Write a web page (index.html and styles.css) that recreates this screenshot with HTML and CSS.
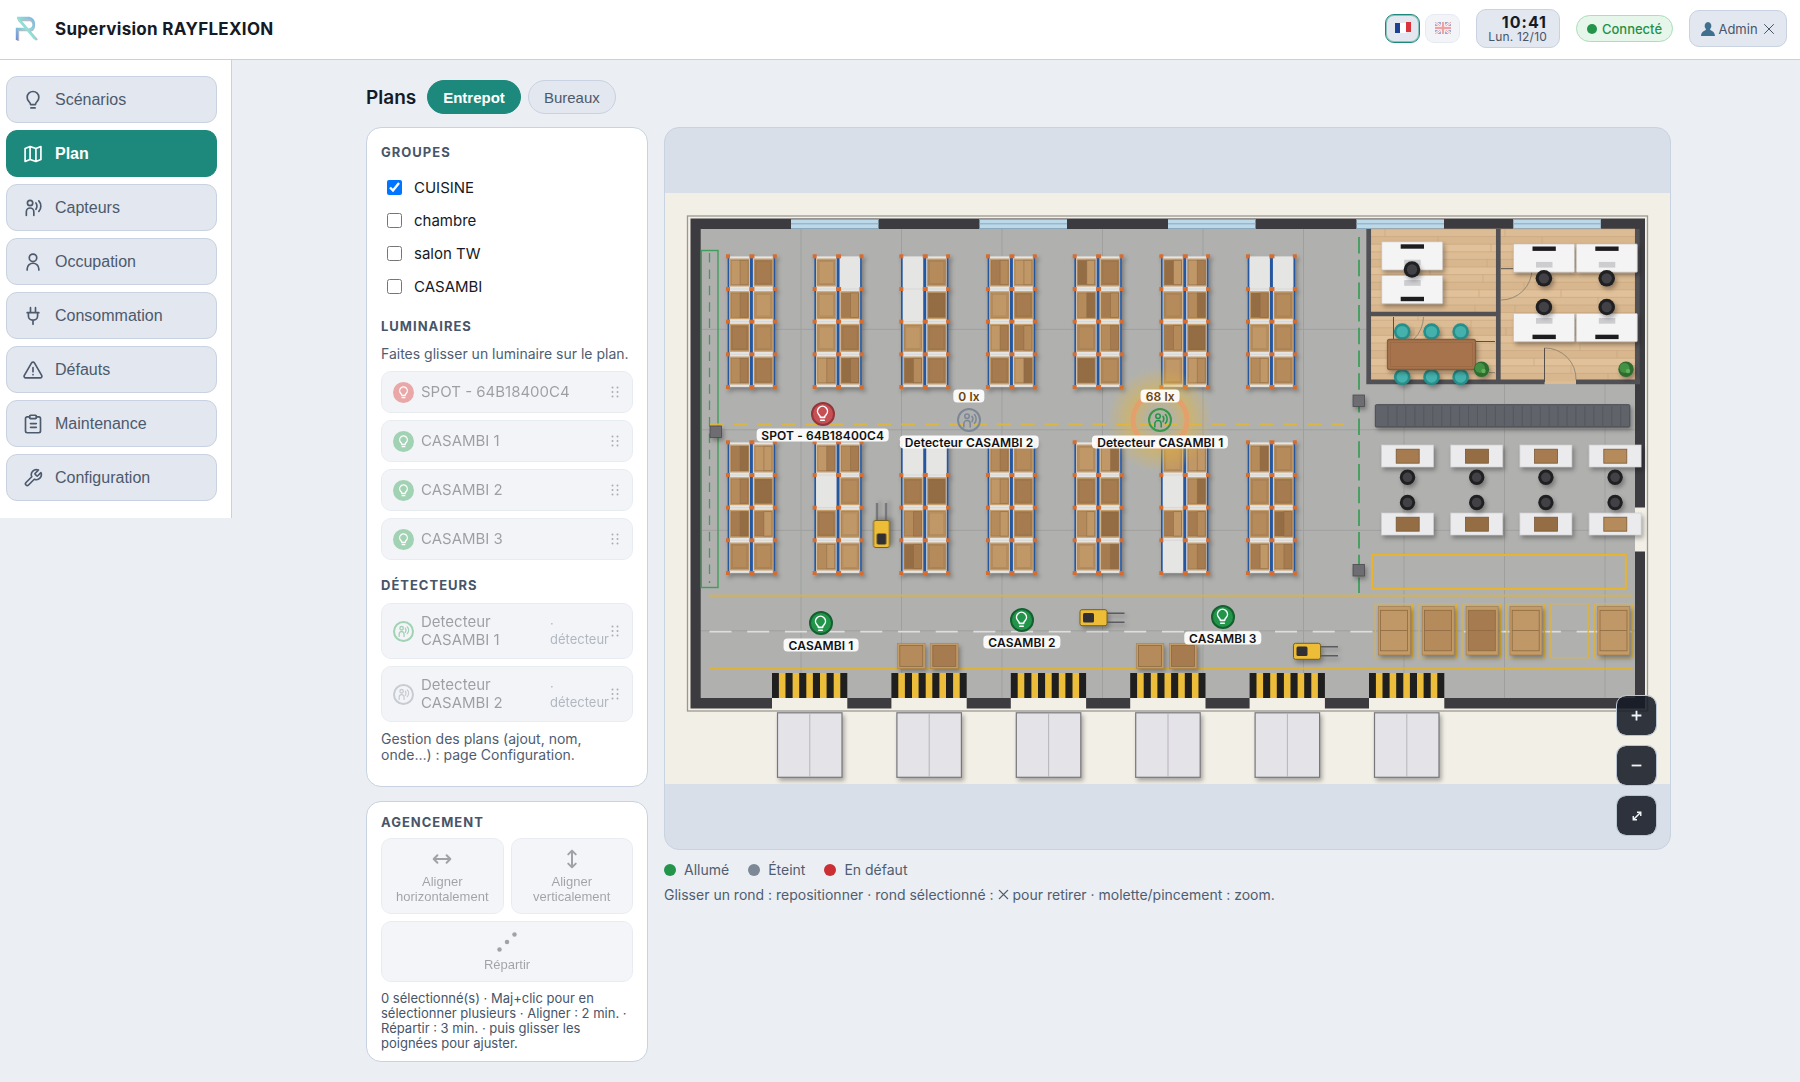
FILE: index.html
```html
<!DOCTYPE html>
<html lang="fr">
<head>
<meta charset="utf-8">
<meta name="viewport" content="width=device-width, initial-scale=1">
<title>Supervision RAYFLEXION</title>
<link rel="stylesheet" href="styles.css">
</head>
<body>
<svg class="sprite" aria-hidden="true">
  <defs>
    <symbol id="i-bulb" viewBox="0 0 24 24"><path d="M9 17.5c0-2-1-2.6-2-3.8a7 7 0 1 1 10 0c-1 1.2-2 1.800-2 3.800zM9.500 21.500h5"/></symbol>
    <symbol id="i-map" viewBox="0 0 24 24"><path d="M2.500 5.500v15.500l6-2.500 7 2.500 6-2.500V3l-6 2.500-7-2.500zM8.500 3v15.500M15.500 5.500V21"/></symbol>
    <symbol id="i-sensor" viewBox="0 0 24 24"><circle cx="8.500" cy="6" r="3.200"/><path d="M4 21v-4.500a4.500 4.500 0 0 1 9 0V21M15.500 6c1.500 2 1.500 5 0 7.500M19 3.500c3.200 3.500 3.200 9 0 12.500"/></symbol>
    <symbol id="i-user" viewBox="0 0 24 24"><circle cx="12" cy="7" r="4.500"/><path d="M5 21.500v-1a7 7 0 0 1 14 0v1"/></symbol>
    <symbol id="i-plug" viewBox="0 0 24 24"><path d="M12 22v-5M9 8V2M15 8V2M5 8h14M6.500 8v4a5 5 0 0 0 5 5h1a5 5 0 0 0 5-5V8"/></symbol>
    <symbol id="i-alert" viewBox="0 0 24 24"><path d="M10.300 3.400 1.600 18.500A2 2 0 0 0 3.300 21.500h17.400a2 2 0 0 0 1.700-3L13.700 3.400a2 2 0 0 0-3.400 0zM12 9v5M12 17.500v.3"/></symbol>
    <symbol id="i-clip" viewBox="0 0 24 24"><rect x="8" y="1.500" width="8" height="4" rx="1"/><path d="M16 3.500h3a2 2 0 0 1 2 2v15a2 2 0 0 1-2 2H5a2 2 0 0 1-2-2v-15a2 2 0 0 1 2-2h3M9 11.500h7M9 16h7"/></symbol>
    <symbol id="i-wrench" viewBox="0 0 24 24"><path d="M14.700 6.300a1 1 0 0 0 0 1.400l1.600 1.600a1 1 0 0 0 1.400 0l3.770-3.770a6 6 0 0 1-7.940 7.940l-6.910 6.910a2.120 2.120 0 0 1-3-3l6.910-6.910a6 6 0 0 1 7.940-7.940l-3.760 3.760z"/></symbol>
    <symbol id="i-horiz" viewBox="0 0 24 24"><path d="M2 12h20M6.500 7.500 2 12l4.500 4.500M17.500 7.500 22 12l-4.500 4.500"/></symbol>
    <symbol id="i-vert" viewBox="0 0 24 24"><path d="M12 2v20M7.500 6.500 12 2l4.500 4.500M7.500 17.500 12 22l4.500-4.500"/></symbol>
    <symbol id="i-close" viewBox="0 0 24 24"><path d="M3 3l18 18M21 3 3 21"/></symbol>
    <symbol id="i-grip" viewBox="0 0 8 12"><g class="solid"><circle cx="1.500" cy="1.500" r="1"/><circle cx="6.500" cy="1.500" r="1"/><circle cx="1.500" cy="6" r="1"/><circle cx="6.500" cy="6" r="1"/><circle cx="1.500" cy="10.500" r="1"/><circle cx="6.500" cy="10.500" r="1"/></g></symbol>
  </defs>
</svg>

<header class="topbar">
  <svg class="logo" viewBox="0 0 24 28" aria-hidden="true">
    <defs><linearGradient id="lg" x1="0" y1="1" x2="1" y2="0"><stop offset="0" stop-color="#6f8fe0"/><stop offset=".5" stop-color="#8fe3d4"/><stop offset="1" stop-color="#7eb0e6"/></linearGradient></defs>
    <path class="logo-shade" d="M4 5h12a6 6 0 0 1 2 10l-3 1M5 5l18 20M4 26V15h9"/>
    <path d="M3 3h12a6 6 0 0 1 2 11l-3 1M4 3l17 21M3 25V14h9" stroke="url(#lg)"/>
  </svg>
  <h1 class="brand">Supervision RAYFLEXION</h1>
  <div class="langs">
    <button class="lang lang-on" type="button" aria-label="Français">
      <svg width="16" height="12" viewBox="0 0 16 12"><path fill="#1d3f94" d="M0 1h5v10H0z"/><path fill="#fff" d="M5 1h6v10H5z"/><path fill="#d9343a" d="M11 0h5v10h-5z"/></svg>
    </button>
    <button class="lang lang-off" type="button" aria-label="English">
      <svg width="16" height="12" viewBox="0 0 16 12"><path fill="#2b4597" d="M0 0h16v12H0z"/><path stroke="#fff" stroke-width="2.500" d="M0 0l16 12M16 0 0 12"/><path stroke="#d9343a" d="M0 0l16 12M16 0 0 12"/><path stroke="#fff" stroke-width="4" d="M8 0v12M0 6h16"/><path stroke="#d9343a" stroke-width="2.400" d="M8 0v12M0 6h16"/></svg>
    </button>
  </div>
  <div class="clock"><strong>10:41</strong><span>Lun. 12/10</span></div>
  <div class="status"><i class="dot on"></i>Connecté</div>
  <button class="account" type="button">
    <svg width="14" height="14" viewBox="0 0 14 14"><path fill="#41708f" d="M7 0a3.500 4 0 0 1 2 7.200c0 1.500 5 1.800 5 6.800H0c0-5 5-5.300 5-6.800A3.500 4 0 0 1 7 0z"/></svg>
    Admin
    <svg class="icon x-icon"><use href="#i-close"/></svg>
  </button>
</header>

<div class="shell">
  <nav class="side">
    <a class="nav" href="#scenarios"><svg class="icon"><use href="#i-bulb"/></svg>Scénarios</a>
    <a class="nav active" href="#plan" aria-current="page"><svg class="icon"><use href="#i-map"/></svg>Plan</a>
    <a class="nav" href="#capteurs"><svg class="icon"><use href="#i-sensor"/></svg>Capteurs</a>
    <a class="nav" href="#occupation"><svg class="icon"><use href="#i-user"/></svg>Occupation</a>
    <a class="nav" href="#consommation"><svg class="icon"><use href="#i-plug"/></svg>Consommation</a>
    <a class="nav" href="#defauts"><svg class="icon"><use href="#i-alert"/></svg>Défauts</a>
    <a class="nav" href="#maintenance"><svg class="icon"><use href="#i-clip"/></svg>Maintenance</a>
    <a class="nav" href="#configuration"><svg class="icon"><use href="#i-wrench"/></svg>Configuration</a>
  </nav>

  <main class="main">
    <div class="content">
      <div class="plans">
        <h2>Plans</h2>
        <button class="tab tab-on" type="button">Entrepot</button>
        <button class="tab" type="button">Bureaux</button>
      </div>
      <div class="columns">
        <aside class="tools">
          <section class="card card-list">
            <h3>Groupes</h3>
            <div class="groups">
              <label><input type="checkbox" checked>CUISINE</label>
              <label><input type="checkbox">chambre</label>
              <label><input type="checkbox">salon TW</label>
              <label><input type="checkbox">CASAMBI</label>
            </div>
            <h3>Luminaires</h3>
            <p class="help">Faites glisser un luminaire sur le plan.</p>
            <ul class="items">
              <li><span class="badge red"><svg><use href="#i-bulb"/></svg></span><span class="name">SPOT - 64B18400C4</span><svg class="grip"><use href="#i-grip"/></svg></li>
              <li><span class="badge green"><svg><use href="#i-bulb"/></svg></span><span class="name">CASAMBI 1</span><svg class="grip"><use href="#i-grip"/></svg></li>
              <li><span class="badge green"><svg><use href="#i-bulb"/></svg></span><span class="name">CASAMBI 2</span><svg class="grip"><use href="#i-grip"/></svg></li>
              <li><span class="badge green"><svg><use href="#i-bulb"/></svg></span><span class="name">CASAMBI 3</span><svg class="grip"><use href="#i-grip"/></svg></li>
            </ul>
            <h3>Détecteurs</h3>
            <ul class="items detectors">
              <li><span class="badge ring-green"><svg><use href="#i-sensor"/></svg></span><span class="name">Detecteur CASAMBI 1</span><span class="kind">· détecteur</span><svg class="grip"><use href="#i-grip"/></svg></li>
              <li><span class="badge ring-grey"><svg><use href="#i-sensor"/></svg></span><span class="name">Detecteur CASAMBI 2</span><span class="kind">· détecteur</span><svg class="grip"><use href="#i-grip"/></svg></li>
            </ul>
            <p class="help manage">Gestion des plans (ajout, nom, onde…) : page Configuration.</p>
          </section>
          <section class="card card-align">
            <h3>Agencement</h3>
            <div class="align">
              <button type="button" disabled><svg class="icon"><use href="#i-horiz"/></svg>Aligner horizontalement</button>
              <button type="button" disabled><svg class="icon"><use href="#i-vert"/></svg>Aligner verticalement</button>
              <button class="wide" type="button" disabled><svg class="icon" viewBox="0 0 24 24"><g class="solid"><circle cx="3" cy="21" r="2.700"/><circle cx="12" cy="12" r="2.700"/><circle cx="21" cy="3" r="2.700"/></g></svg>Répartir</button>
            </div>
            <p class="note">0 sélectionné(s) · Maj+clic pour en sélectionner plusieurs · Aligner : 2 min. · Répartir : 3 min. · puis glisser les poignées pour ajuster.</p>
          </section>
        </aside>

        <section class="view">
          <div class="map">
            <div class="plan" id="plan">
              <svg class="floor" id="floor" viewBox="665 193 1005 591" role="img" aria-label="Plan de l'entrepôt"></svg>
            </div>
            <div class="zoom">
              <button type="button" aria-label="Zoom avant"><svg class="icon" viewBox="0 0 24 24"><path d="M12 3v18M3 12h18"/></svg></button>
              <button type="button" aria-label="Zoom arrière"><svg class="icon" viewBox="0 0 24 24"><path d="M3 12h18"/></svg></button>
              <button type="button" aria-label="Ajuster"><svg class="icon fit" viewBox="0 0 24 24"><path d="M3 21 21 3M12 3h9v9M3 12v9h9"/></svg></button>
            </div>
          </div>
          <div class="legend">
            <span><i class="dot on"></i>Allumé</span>
            <span><i class="dot off"></i>Éteint</span>
            <span><i class="dot fault"></i>En défaut</span>
          </div>
          <p class="hint">Glisser un rond : repositionner · rond sélectionné : <svg class="icon"><use href="#i-close"/></svg> pour retirer · molette/pincement : zoom.</p>
        </section>
      </div>
    </div>
  </main>
</div>
<script src="plan.js"></script>
</body>
</html>
```
FILE: styles.css
```css
*, ::before, ::after { box-sizing: border-box; }
body {
  margin: 0;
  background: #ebeef3;
  color: #141a26;
  font-family: Inter, "Liberation Sans", sans-serif;
  font-size: 15px;
}
h1, h2, h3, p, ul { margin: 0; padding: 0; }
ul { list-style: none; }
button { font-family: "Liberation Sans", Arial, sans-serif; cursor: pointer; }
.sprite { position: absolute; width: 0; height: 0; }
.icon {
  width: 20px; height: 20px; flex: none;
  fill: none; stroke: currentColor; stroke-width: 2;
  stroke-linecap: round; stroke-linejoin: round;
}
.solid { fill: currentColor; stroke: none; }

.topbar {
  display: flex; align-items: center;
  height: 60px; padding: 0 13px 2px 14px;
  background: #fff; border-bottom: 1px solid #c8d1dc;
}
.logo { width: 24px; height: 28px; fill: none; stroke-width: 2.4; }
.logo-shade { stroke: #b9bcc4; }
.brand { margin: 0 auto 0 17px; font-size: 17px; font-weight: 700; letter-spacing: .3px; }
.langs { display: flex; gap: 5px; margin-right: 16px; }
.lang {
  display: flex; align-items: center; justify-content: center;
  width: 35px; height: 29px; padding: 0 0 2px;
  border: 1px solid #c8d2e0; border-radius: 9px; background: #e3e7ef;
}
.lang-on { border-color: #1d897c; box-shadow: inset 0 0 0 1px #8cc2bd; }
.lang-off { opacity: .45; }
.clock {
  display: flex; flex-direction: column; align-items: flex-end; justify-content: center;
  width: 84px; height: 39px; padding-right: 12px; margin-right: 16px;
  border: 1px solid #c8d2e0; border-radius: 10px; background: #e3e7ef;
  font-size: 12px; line-height: 14px; color: #475569; letter-spacing: .2px;
}
.clock strong { font-size: 16px; line-height: 16px; color: #141a26; letter-spacing: 1px; }
.status {
  display: flex; align-items: center; gap: 5px;
  height: 27px; width: 97px; justify-content: center; margin-right: 16px;
  border: 1px solid #a9dfb9; border-radius: 14px; background: #e6f6ea;
  color: #1f9148; font-size: 13px; font-weight: 500;
}
.dot { width: 12px; height: 12px; border-radius: 50%; flex: none; }
.status .dot { width: 10px; height: 10px; }
.dot.on { background: #22954b; }
.dot.off { background: #7d8896; }
.dot.fault { background: #cb2f33; }
.account {
  display: flex; align-items: center; justify-content: center; gap: 3px;
  width: 98px; height: 37px; padding: 0;
  border: 1px solid #c8d2e0; border-radius: 10px; background: #e3e7ef;
  color: #475569; font-family: Inter, sans-serif; font-size: 13px;
}
.x-icon { width: 12px; height: 12px; margin-left: 2px; }

.shell { display: grid; grid-template-columns: 232px minmax(0, 1fr); align-items: start; }
.side {
  display: flex; flex-direction: column; gap: 7px;
  padding: 16px 14px 17px 6px;
  background: #fff; border-right: 1px solid #c8d1dc;
}
.nav {
  display: flex; align-items: center; gap: 12px;
  height: 47px; padding: 0 16px;
  border: 1px solid #c8d2e0; border-radius: 11px; background: #e3e7ef;
  color: #4c5a6d; text-decoration: none;
  font-family: "Liberation Sans", Arial, sans-serif; font-size: 16px;
}
.nav.active { background: #1d897c; border-color: #1d897c; color: #fff; font-weight: 700; }

.main { padding: 20px 20px 18px 25px; }
.content { max-width: 1305px; margin: 0 auto; }
.plans { display: flex; align-items: center; gap: 7px; height: 34px; margin-bottom: 13px; }
.plans h2 { margin-right: 4px; font-size: 19px; font-weight: 600; }
.tab {
  height: 34px; padding: 0 15px;
  border: 1px solid #c8d2e0; border-radius: 17px; background: #e3e7ef;
  color: #4c5a6d; font-size: 15px;
}
.tab-on { background: #1d897c; border-color: #1d897c; color: #fff; font-weight: 700; }
.columns { display: grid; grid-template-columns: 282px minmax(0, 1fr); gap: 16px; align-items: start; }
.tools { display: grid; gap: 14px; }
.card { border: 1px solid #c8d2e0; border-radius: 15px; background: #fff; padding: 16px 14px; }
.card h3 {
  color: #475569; font-size: 13px; line-height: 16px; font-weight: 700;
  letter-spacing: 1px; text-transform: uppercase;
}
.groups { padding: 11px 6px 15px; }
.groups label { display: flex; align-items: center; gap: 12px; height: 33px; }
.groups input { width: 15px; height: 15px; margin: 0; }
.help { color: #4f5d70; font-size: 14px; line-height: 16px; }
.card-list .help { margin: 12px 0 9px; }
.items { display: grid; gap: 7px; margin-bottom: 17px; }
.items li {
  display: flex; align-items: center; gap: 7px;
  min-height: 42px; padding: 9px 13px 9px 11px;
  border: 1px solid #c8d2e0; border-radius: 10px; background: #e3e7ef;
  opacity: .42; line-height: 18px;
}
.name { flex: 1; }
.detectors { margin: 10px 0 9px; }
.detectors li { min-height: 56px; }
.kind { width: 58px; margin-right: -4px; color: #475569; font-size: 13px; line-height: 16px; }
.grip { width: 8px; height: 12px; flex: none; color: #333c4a; }
.badge { display: grid; place-items: center; width: 21px; height: 21px; border-radius: 50%; flex: none; }
.badge svg { width: 13px; height: 13px; fill: none; stroke: #fff; stroke-width: 2.4; stroke-linecap: round; }
.badge.red { background: #cb2f33; }
.badge.green { background: #22954b; }
.badge.ring-green { border: 2px solid #22954b; }
.badge.ring-grey { border: 2px solid #7d8896; }
.badge.ring-green svg { stroke: #22954b; }
.badge.ring-grey svg { stroke: #7d8896; }
.card-list { padding-bottom: 23px; }
.card-list .manage { margin: 0; }
.card-align { padding: 12px 14px 10px; }
.align { display: grid; grid-template-columns: 1fr 1fr; gap: 7px; margin: 8px 0 9px; }
.align button {
  display: flex; flex-direction: column; align-items: center; justify-content: center; gap: 5px;
  height: 76px; padding: 0 4px;
  border: 1px solid #c8d2e0; border-radius: 10px; background: #e3e7ef;
  color: #141a26; font-size: 13px; line-height: 15px; opacity: .4;
}
.align .icon { stroke-width: 2.4; }
.align .wide { grid-column: 1 / -1; height: 61px; }
.note { color: #475569; font-size: 13px; line-height: 15px; }

.map {
  position: relative; display: grid; align-items: center;
  aspect-ratio: 1007 / 723; overflow: hidden;
  border: 1px solid #c8d2e0; border-radius: 15px; background: #d8dfe8;
}
.plan { position: relative; aspect-ratio: 1005 / 591; }
.floor { display: block; width: 100%; height: 100%; }
.cast { filter: drop-shadow(2px 3px 2px rgba(0, 0, 0, .3)); }
.marker {
  position: absolute; isolation: isolate; display: grid; place-items: center;
  width: 24px; height: 24px; margin: -12px 0 0 -12px; padding: 0;
  border: 2px solid #14602f; border-radius: 50%; background: #22954b;
}
.marker svg { width: 17px; height: 17px; fill: none; stroke: #fff; stroke-width: 2.2; stroke-linecap: round; stroke-linejoin: round; }
.marker.fault { background: #c75054; border-color: #93363b; }
.marker.sensor-on { background: transparent; border-color: #22954b; }
.marker.sensor-on svg { stroke: #22954b; }
.marker.sensor-off { background: transparent; border-color: #7d8896; }
.marker.sensor-off svg { stroke: #7d8896; }
.sensor-on::before, .sensor-on::after {
  content: ""; position: absolute; z-index: -1; top: 50%; left: 50%;
  border-radius: 50%; transform: translate(-50%, -50%);
}
.sensor-on::before {
  width: 110px; height: 110px;
  background: radial-gradient(circle, rgba(232, 184, 50, .1) 16%, rgba(226, 180, 60, .55) 36%, rgba(232, 184, 50, 0) 68%);
}
.sensor-on::after { width: 59px; height: 59px; border: 5px solid #e3a06d; }
.marker-name, .lux {
  position: absolute; transform: translate(-50%, -50%);
  padding: 0 5px; border-radius: 4px; background: rgba(255, 255, 255, .92);
  color: #111; font-size: 12px; line-height: 13px; font-weight: 600; letter-spacing: .1px; white-space: nowrap;
}
.lux { color: #6b4410; }
.zoom { position: absolute; right: 13px; bottom: 13px; display: grid; gap: 9px; }
.zoom button {
  display: grid; place-items: center; width: 41px; height: 41px; padding: 0;
  border: 1px solid #b9c5d3; border-radius: 10px; background: rgba(20, 26, 36, .88);
  background-clip: padding-box; color: #f1f4f8;
}
.zoom .icon { width: 13px; height: 13px; stroke-width: 3.4; stroke-linecap: butt; }
.zoom .fit { width: 10px; height: 10px; stroke-linejoin: miter; }
.legend { display: flex; gap: 19px; margin: 11px 0 7px; color: #4f5d70; font-size: 14px; line-height: 18px; }
.legend span { display: flex; align-items: center; gap: 8px; }
.hint { color: #4f5d70; font-size: 14px; line-height: 18px; }
.hint .icon { width: 11px; height: 11px; stroke-width: 3; }
```
FILE: plan.js
```js
const floor = document.getElementById('floor');
const plan = document.getElementById('plan');
const TONE = { L: '#c09767', M: '#b58b5c', D: '#a57b4f', X: '#946d44' };
const out = [];
const rect = (x, y, w, h, fill, extra = '') =>
  out.push(`<rect x="${x}" y="${y}" width="${w}" height="${h}" fill="${fill}" ${extra}/>`);
const line = (d, stroke, w, extra = '') =>
  out.push(`<path d="${d}" fill="none" stroke="${stroke}" stroke-width="${w}" ${extra}/>`);
const disc = (x, y, r, fill, extra = '') =>
  out.push(`<circle cx="${x}" cy="${y}" r="${r}" fill="${fill}" ${extra}/>`);
const group = (draw) => { out.push('<g class="cast">'); draw(); out.push('</g>'); };

// Ground, slab and joints
rect(665, 193, 1005, 591, '#f2efe7');
rect(687.5, 216, 960, 495, 'none', 'stroke="#9a988f" stroke-width="1.300"');
rect(690.5, 218.5, 954.5, 490, '#3c3b40');
rect(700.7, 229, 934.3, 469, '#b0b1af');
for (let x = 801; x < 1630; x += 100.5) line(`M${x} 229V698`, '#9fa09e', 1);
for (let y = 329.3; y < 690; y += 100.5) line(`M701 ${y}H1635`, '#9fa09e', 1);
[791, 979.5, 1168, 1356.5, 1513.3].forEach((x) => {
  rect(x, 219, 87.5, 10, '#bcd9ea');
  line(`M${x} 219.500h87.500M${x} 223.800h87.500M${x} 228.500h87.500`, '#8aa9bd', 1);
});
rect(1635, 507.500, 11, 44, '#f2efe7');

// Ground markings
rect(701.3, 250.500, 16.700, 337, 'none', 'stroke="#3f9e5b" stroke-width="1.400"');
line('M709.500 253V583', '#3f9e5b', 1.3, 'stroke-dasharray="9.500 6.900"');
line('M1359 237V593', '#3f9e5b', 1.8, 'stroke-dasharray="16.500 6.200"');
line('M710 424.500H1344', '#dab644', 1.8, 'stroke-dasharray="14 9.900"');
line('M709.500 595.700H1632.500M709.500 668.500H1632.500', '#ddb23a', 1.7);
line('M709.500 631.700H1632', '#dedfdd', 1.8, 'stroke-dasharray="22 15.700"');
rect(1372.300, 555, 253.500, 34, 'none', 'stroke="#e7b42c" stroke-width="2"');

// Storage racks, each cell one or two boxes; "-" is an empty slot
const racks = [
  ['LM D MD L D M MD D', 'L - L DM L D LM XD', '- M - X L D XM D', 'DM LL L D LD DM D LX', 'XL D MX DM M MD X M', 'XL LD M MX DM X L LM', '- - XD M L M ML M'],
  ['DX LL MD X DX DL M M', 'LD MD - M D L ML L', '- - D X MD L XD M', 'MD M LM D ML D L L', 'L LX D D ML X L DX', 'L LL - MX DL DM - MD', 'MX M M D M XD DL MD']
];
racks.forEach((row, r) => row.forEach((cells, c) => {
  const x = 728 + c * 86.67;
  const y = r ? 442.3 : 256.3;
  group(() => {
    rect(x, y, 46.800, 130.700, '#e5e5e4');
    cells.split(' ').forEach((cell, i) => {
      const cx = x + 1.8 + (i % 2) * 23.8;
      const cy = y + 2.2 + Math.floor(i / 2) * 32.67;
      if (cell === '-') return;
      rect(cx, cy, 19.600, 28, '#c7a06e');
      rect(cx + 1.3, cy + 1.8, 17, 24.4, TONE[cell[0]], 'stroke="#8a6743" stroke-opacity=".5" stroke-width=".8"');
      if (cell[1]) rect(cx + 10.3, cy + 1.8, 8, 24.4, TONE[cell[1]], 'stroke="#8a6743" stroke-opacity=".6" stroke-width=".8"');
      else rect(cx + 2.6, cy + 3.1, 14.4, 21.8, 'none', 'stroke="#8a6743" stroke-opacity=".35" stroke-width=".7"');
    });
    for (let k = 0; k < 5; k++) line(`M${x} ${y + k * 32.67}h46.800`, '#c9c9c8', 0.5);
    line(`M${x + 0.5} ${y}v130.700M${x + 46.3} ${y}v130.700`, '#2457a0', 1.7);
    line(`M${x + 23.4} ${y}v130.700`, '#2457a0', 3);
    for (let k = 0; k < 15; k++)
      rect(x - 2 + (k % 3) * 23.4, y - 2 + Math.floor(k / 3) * 32.67, k % 3 === 1 ? 5 : 4, 4, '#d66c2e');
  });
}));

// Pillars
[[710, 426], [1353, 395], [1353, 564.5]].forEach(([x, y]) =>
  group(() => rect(x, y, 11.5, 11.5, '#6e6d72', 'stroke="#4b4a4f" stroke-width=".8"')));

// Offices
rect(1371, 229, 264, 151, '#dcbc94');
rect(1544.5, 379, 31.500, 5, '#dcbc94');
for (let i = 0; i < 20; i++) {
  const y = 229 + i * 7.6;
  if (i % 3) rect(1371, y, 264, 7.6, i % 3 === 1 ? '#d5b48b' : '#e2c39b', 'opacity=".7"');
  line(`M1371 ${y}H1635`, '#c6a57c', 0.6);
  line(`M${1385 + (i * 53) % 110} ${y}v7.600M${1505 + (i * 37) % 120} ${y}v7.600`, '#c6a57c', 0.6);
}
line('M1368.700 229V384M1366.300 314H1500.500M1498.300 229V384M1366.300 381.800H1544.500M1576 381.800H1640M1637.300 229V384', '#515055', 4.7);
line('M1501 268.700H1532M1544.500 348V382M1393.500 317V339M1476 341.500H1495', '#56504a', 1);
line('M1532 269A31 31 0 0 1 1501 300M1544.500 348A31 31 0 0 1 1576 380M1423.500 317Q1423 330 1414 339M1489 372.500h6', '#8f8474', 0.9);
const desk = (x, y, flip) => group(() => {
  rect(x, y, 61, 28.3, '#f4f4f4', 'rx="1" stroke="#c4c0bb" stroke-width=".7"');
  rect(x + 19, flip ? y + 21.3 : y + 2.6, 23.3, 4.4, '#1d1d20');
  rect(x + 22.500, flip ? y + 4.6 : y + 18, 16.5, 5.7, '#cdcdd0');
});
const chair = (x, y, r = 8.3) => group(() => { disc(x, y, r, '#202023'); disc(x, y, r * 0.62, '#424246'); });
desk(1381.7, 241.7); desk(1381.7, 275.5, true); chair(1412, 269.5);
[1513.5, 1576.3].forEach((x) => { desk(x, 243.9); desk(x, 313.4, true); chair(x + 30.4, 278.3); chair(x + 30.4, 307); });
[1402.2, 1431.500, 1460.600].forEach((x) => [331.600, 377].forEach((y) =>
  group(() => { disc(x, y, 8.3, '#258f8b'); disc(x, y, 5.7, '#45b1ad'); })));
group(() => rect(1387.5, 339.5, 88, 30, '#a6734c', 'rx="2" stroke="#8b5c3a" stroke-width="1.300"'));
rect(1390.500, 342.500, 82, 24, 'none', 'stroke="#966441" stroke-width=".6"');
[1481.500, 1626].forEach((x) => group(() => { disc(x, 369.300, 7.7, '#2e6b31'); disc(x - 1.500, 368, 5, '#439144'); disc(x + 2, 371, 2.2, '#61b257'); }));

// Conveyor and packing stations
group(() => rect(1375.3, 404.7, 254.5, 22.300, '#606369', 'rx="1" stroke="#484a50"'));
for (let x = 1388; x < 1628; x += 8.95) line(`M${x} 406v20`, '#52545a', 0.8);
['DX', 'XX', 'DX', 'MM'].forEach((tones, i) => {
  const x = 1381.500 + i * 69.2;
  [445, 513].forEach((y, k) => {
    group(() => rect(x, y, 52, 22, '#ebebed', 'stroke="#cfcfd1" stroke-width=".7"'));
    rect(x + 14.700, y + 4.200, 23, 14, TONE[tones[k]], 'stroke="#7a5936" stroke-width=".8"');
  });
  chair(x + 26, 477.300, 7.7);
  chair(x + 26, 502.500, 7.7);
});

// Floor pallets
['L', 'M', 'D', 'L', '', 'L'].forEach((tone, i) => {
  const x = 1375.300 + i * 43.9;
  rect(x, 603.700, 37.300, 54, 'none', 'stroke="#dfb33b" stroke-width="1.300"');
  if (!tone) return;
  group(() => rect(x + 3, 606.500, 32, 48.500, '#c39b66', 'stroke="#a67d4a" stroke-width=".7"'));
  rect(x + 5.200, 610.300, 27, 40.500, TONE[tone], 'stroke="#8d6a42" stroke-width=".8"');
  line(`M${x + 5} 630.500h27`, '#8d6a42', 0.8);
});
[[897.6, 'M'], [930.6, 'D'], [1136.400, 'M'], [1169.400, 'D']].forEach(([x, tone]) => {
  group(() => rect(x, 643.5, 27.500, 25, '#c39b66', 'stroke="#a67d4a" stroke-width=".5"'));
  rect(x + 2.200, 645.500, 23, 21, TONE[tone], 'stroke="#8d6a42" stroke-width=".8"');
});

// Loading docks
for (let i = 0; i < 6; i++) {
  const x = 772 + i * 119.4;
  rect(x, 673, 75.300, 25, '#1f1f1f');
  for (let k = 0; k < 5; k++) rect(x + 6.9 + k * 13.7, 673, 6.6, 25, '#ebbd3b');
  rect(x, 698, 75.300, 11, '#f2efe7');
  group(() => rect(x + 5.5, 712.800, 64.500, 64.500, '#e4e3e8', 'stroke="#77767b" stroke-width="1.200"'));
  line(`M${x + 37.8} 713v64`, '#b5b4b9', 1);
}

// Forklifts
const forklift = (x, y, angle) => {
  out.push(`<g transform="translate(${x} ${y}) rotate(${angle})"><g class="cast">`);
  line('M13 -4.500H31M13 4.500H31', '#5b5a60', 1.6);
  rect(-13.5, -8, 27, 16, '#eebd37', 'rx="2" stroke="#76601f"');
  rect(-10.5, -4.8, 11, 9.6, '#303035', 'rx="1.500"');
  out.push('</g></g>');
};
forklift(881.5, 534, -90);
forklift(1093.5, 617.7, 0);
forklift(1307, 651.3, 0);

floor.innerHTML = out.join('');

// Luminaires and detectors placed on the plan
const markers = [
  { x: 822.7, y: 413.7, state: 'fault', icon: 'bulb', name: 'SPOT - 64B18400C4' },
  { x: 969, y: 420.3, state: 'sensor-off', icon: 'sensor', name: 'Detecteur CASAMBI 2', lux: '0 lx' },
  { x: 1160.3, y: 420.3, state: 'sensor-on', icon: 'sensor', name: 'Detecteur CASAMBI 1', lux: '68 lx' },
  { x: 821, y: 623.5, state: 'on', icon: 'bulb', name: 'CASAMBI 1' },
  { x: 1022, y: 620, state: 'on', icon: 'bulb', name: 'CASAMBI 2' },
  { x: 1222.8, y: 616.8, state: 'on', icon: 'bulb', name: 'CASAMBI 3' }
];
const at = (x, y) => `left:${((x - 665) / 10.05).toFixed(2)}%;top:${((y - 193) / 5.91).toFixed(2)}%`;
plan.insertAdjacentHTML('beforeend', markers.map((m) => `
  <button type="button" class="marker ${m.state}" style="${at(m.x, m.y)}" aria-label="${m.name}"><svg><use href="#i-${m.icon}"/></svg></button>
  <span class="marker-name" style="${at(m.x, m.y + 21.5)}">${m.name}</span>
  ${m.lux ? `<span class="lux" style="${at(m.x, m.y - 24)}">${m.lux}</span>` : ''}`).join(''));
```
